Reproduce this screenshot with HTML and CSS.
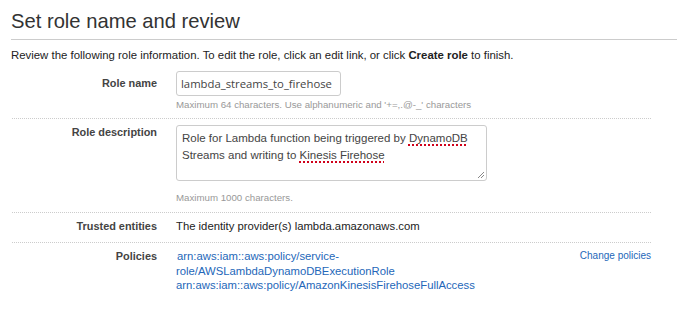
FILE: index.html
```html
<!DOCTYPE html>
<html lang="en">
<head>
    <meta charset="UTF-8">
    <meta name="viewport" content="width=device-width, initial-scale=1.0">
    <title>Set role name and review</title>
    <link rel="stylesheet" href="styles.css">
</head>
<body>
    <div class="page">
        <h1 class="title">Set role name and review</h1>
        <p class="intro">Review the following role information. To edit the role, click an edit link, or click <b>Create role</b> to finish.</p>

        <div class="review">
            <div class="row row-name">
                <div class="label">Role name</div>
                <div class="value">
                    <input class="field" type="text" value="lambda_streams_to_firehose">
                    <div class="hint">Maximum 64 characters. Use alphanumeric and '+=,.@-_' characters</div>
                </div>
            </div>

            <div class="row row-desc">
                <div class="label">Role description</div>
                <div class="value">
                    <div class="textarea">Role for Lambda function being triggered by <span class="typo">DynamoDB</span> Streams and writing to <span class="typo">Kinesis Firehose</span>
                        <svg class="grip" width="9" height="9" viewBox="0 0 9 9">
                            <path d="M8 2 L2 8 M8 5 L5 8" stroke="#888" stroke-width="1"/>
                        </svg>
                    </div>
                    <div class="hint hint-desc">Maximum 1000 characters.</div>
                </div>
            </div>

            <div class="row">
                <div class="label">Trusted entities</div>
                <div class="value text">The identity provider(s) lambda.amazonaws.com</div>
            </div>

            <div class="row row-policies">
                <div class="label">Policies</div>
                <div class="value policies">
                    <div class="policy-list">
                        <a href="#" class="first">arn:aws:iam::aws:policy/service-role/AWSLambdaDynamoDBExecutionRole</a><br>
                        <a href="#">arn:aws:iam::aws:policy/AmazonKinesisFirehoseFullAccess</a>
                    </div>
                    <a href="#" class="change">Change policies</a>
                </div>
            </div>
        </div>
    </div>
</body>
</html>
```

FILE: styles.css
```css
:root {
    --text: #333333;
    --label: #444444;
    --muted: #999999;
    --rule: #cccccc;
    --link: #2467b9;
}

* {
    margin: 0;
    padding: 0;
    box-sizing: border-box;
}

body {
    margin: 0;
    background: #ffffff;
    color: var(--text);
    font-family: 'Liberation Sans', Arial, sans-serif;
    font-size: 11.3px;
}

.page {
    padding-left: 11px;
}

.title {
    font-size: 20.2px;
    font-weight: normal;
    line-height: 26px;
    padding-top: 8px;
    padding-bottom: 5px;
    color: #333;
    border-bottom: 1px solid var(--rule);
}

.intro {
    margin-top: 8px;
    line-height: 15px;
    font-size: 11.4px;
    color: #222;
}

.review {
    width: 639px;
    margin-left: 1px;
}

.row {
    display: grid;
    grid-template-columns: 145px 1fr;
    column-gap: 19px;
    padding: 6px 0 8px;
    border-bottom: 1px dotted var(--rule);
}

.row:last-child {
    border-bottom: none;
}

.row-name {
    padding-top: 8px;
    padding-bottom: 7px;
}

.row-name .label {
    padding-top: 5px;
}

.label {
    text-align: right;
    font-weight: bold;
    font-size: 10.9px;
    color: var(--label);
    line-height: 15px;
}

.value {
    line-height: 15px;
}

.field {
    display: block;
    width: 165px;
    height: 25px;
    padding: 0 4px;
    border: 1px solid var(--rule);
    border-radius: 3px;
    font-family: 'Open Sans', 'Liberation Sans', sans-serif;
    font-size: 11.3px;
    color: #444;
    background: #fff;
}

.hint {
    margin-top: 2px;
    font-size: 9.7px;
    line-height: 13px;
    color: var(--muted);
}

.hint-desc {
    margin-top: 10px;
}

.textarea {
    position: relative;
    width: 311px;
    height: 56px;
    padding: 4px 5px;
    border: 1px solid var(--rule);
    border-radius: 3px;
    font-size: 11.5px;
    line-height: 17px;
    color: #444;
}

.typo {
    text-decoration: underline dotted #d0021b;
    text-decoration-thickness: 2px;
    text-underline-offset: 2px;
}

.grip {
    position: absolute;
    right: 1px;
    bottom: 1px;
}

.text {
    color: #222;
}

.row-policies .value {
    line-height: 14.5px;
}

.policies {
    display: flex;
    justify-content: space-between;
    align-items: flex-start;
}

.policy-list {
    width: 330px;
}

.policies a {
    color: var(--link);
    text-decoration: none;
}

.policies a.first {
    margin-left: 1px;
}

.policies a.change {
    font-size: 10px;
}
```
